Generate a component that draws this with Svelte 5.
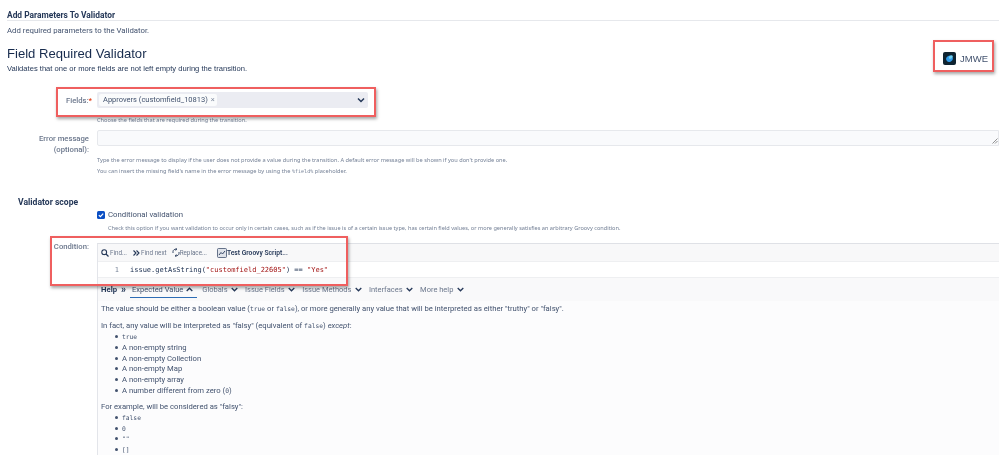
<script>
  const listA = ['A non-empty string', 'A non-empty Collection', 'A non-empty Map', 'A non-empty array'];
  const tabs = ['Globals', 'Issue Fields', 'Issue Methods', 'Interfaces', 'More help'];
</script>

<div class="page">
  <div class="section-title">Add Parameters To Validator</div>
  <div class="section-sub">Add required parameters to the Validator.</div>

  <div class="head">
    <div>
      <h1>Field Required Validator</h1>
      <p class="lead">Validates that one or more fields are not left empty during the transition.</p>
    </div>
    <div class="brand">
      <svg width="13" height="13" viewBox="0 0 13 13"><rect width="13" height="13" rx="2" fill="#0f2330"/><ellipse cx="6.5" cy="6.8" rx="3.4" ry="3" fill="#2f9ae8" transform="rotate(-35 6.5 6.8)"/><ellipse cx="7.8" cy="5" rx="2.2" ry="1.5" fill="#6fd0f0" transform="rotate(-35 7.8 5)"/></svg>
      <span>JMWE</span>
    </div>
  </div>

  <div class="row fields">
    <div class="label">Fields:<span class="req">*</span></div>
    <div class="control">
      <div class="select">
        <span class="chip">Approvers (customfield_10813) <span class="x">×</span></span>
        <svg class="chev" width="8" height="6" viewBox="0 0 8 6"><path d="M1 1.5 4 4.5 7 1.5" fill="none" stroke="#253858" stroke-width="1.5"/></svg>
      </div>
      <div class="help">Choose the fields that are required during the transition.</div>
    </div>
  </div>

  <div class="row error">
    <div class="label">Error message<br />(optional):</div>
    <div class="control">
      <div class="textarea">
        <svg class="grip" width="6" height="6" viewBox="0 0 6 6"><path d="M0.5 5.5 5.5 0.5M3 5.5 5.5 3" stroke="#777" stroke-width="0.8"/></svg>
      </div>
      <div class="help first">Type the error message to display if the user does not provide a value during the transition. A default error message will be shown if you don't provide one.</div>
      <div class="help">You can insert the missing field's name in the error message by using the <code>%field%</code> placeholder.</div>
    </div>
  </div>

  <div class="scope-title">Validator scope</div>
  <div class="row check">
    <div class="label"></div>
    <div class="control">
      <div class="check-line">
        <svg width="8" height="8" viewBox="0 0 8 8"><rect width="8" height="8" rx="1.5" fill="#0b4fc4"/><path d="M1.8 4.1 3.4 5.6 6.2 2.6" fill="none" stroke="#fff" stroke-width="1.2"/></svg>
        <span>Conditional validation</span>
      </div>
      <div class="help indent">Check this option if you want validation to occur only in certain cases, such as if the issue is of a certain issue type, has certain field values, or more generally satisfies an arbitrary Groovy condition.</div>
    </div>
  </div>

  <div class="row cond">
    <div class="label">Condition:</div>
    <div class="editor">
      <div class="toolbar">
        <span class="tool t1">
          <svg width="8" height="8" viewBox="0 0 8 8"><circle cx="3.2" cy="3.2" r="2.4" fill="none" stroke="#253858" stroke-width="1.1"/><path d="M5 5 7.5 7.5" stroke="#253858" stroke-width="1.2"/></svg>
          Find...
        </span>
        <span class="tool t2">
          <svg width="7" height="6" viewBox="0 0 7 6"><path d="M0.5 0.5 3 3 0.5 5.5M3.5 0.5 6 3 3.5 5.5" fill="none" stroke="#253858" stroke-width="1.1"/></svg>
          Find next
        </span>
        <span class="tool t3">
          <svg width="8" height="9" viewBox="0 0 8 9"><path d="M1 5V3.5C1 2 2.5 1.2 4 1.2M7 4v1.500C7 7 5.500 7.800 4 7.800M3.500 0 5 1.200 3.500 2.400M4.500 6.600 3 7.800 4.500 9" fill="none" stroke="#253858" stroke-width="0.9"/></svg>
          Replace...
        </span>
        <span class="tool test">
          <svg width="10" height="10" viewBox="0 0 10 10"><rect x="0.5" y="0.5" width="9" height="9" rx="1" fill="#dfe3ea" stroke="#42526e" stroke-width="0.8"/><path d="M2 7 4 4.500 5.500 6 8 3" fill="none" stroke="#253858" stroke-width="0.9"/></svg>
          <b>Test Groovy Script...</b>
        </span>
      </div>
      <div class="code">
        <span class="gutter">1</span>
        <span class="src">issue.getAsString(<em>"customfield_22605"</em>) == <em>"Yes"</em></span>
      </div>
      <div class="tabs">
        <b class="help-tag">Help</b><b class="arrows">»</b>
        <span class="tab active">Expected Value <svg width="7" height="5" viewBox="0 0 7 5"><path d="M0.700 4 3.500 1.200 6.300 4" fill="none" stroke="#253858" stroke-width="1.300"/></svg></span>
        {#each tabs as tab}
          <span class="tab">{tab} <svg width="7" height="5" viewBox="0 0 7 5"><path d="M0.700 1 3.500 3.800 6.300 1" fill="none" stroke="#253858" stroke-width="1.300"/></svg></span>
        {/each}
      </div>
      <div class="body">
        <p>The value should be either a boolean value (<code>true</code> or <code>false</code>), or more generally any value that will be interpreted as either "truthy" or "falsy".</p>
        <p class="tight">In fact, any value will be interpreted as "falsy" (equivalent of <code>false</code>) <i>except</i>:</p>
        <ul>
          <li><code>true</code></li>
          {#each listA as item}<li>{item}</li>{/each}
          <li>A number different from zero (<code>0</code>)</li>
        </ul>
        <p class="tight">For example, will be considered as "falsy":</p>
        <ul>
          <li><code>false</code></li>
          <li><code>0</code></li>
          <li><code>""</code></li>
          <li><code>[]</code></li>
        </ul>
      </div>
    </div>
  </div>

  <div class="mark m1"></div>
  <div class="mark m2"></div>
  <div class="mark m3"></div>
</div>

<style>
  :global(body) { margin: 0; background: #fff; }
  .page {
    position: relative;
    width: 999px;
    height: 455px;
    overflow: hidden;
    font-family: Roboto, sans-serif;
    font-size: 8px;
    color: #253858;
    filter: blur(0.3px);
  }
  .section-title {
    margin-left: 7px;
    padding-top: 10px;
    height: 10px;
    line-height: 10px;
    font-size: 8.4px;
    font-weight: 700;
    border-bottom: 1px solid #e6e8ec;
  }
  .section-sub { margin: 5px 0 0 7px; line-height: 10px; font-size: 7.8px; color: #42526e; }
  .head { display: flex; justify-content: space-between; padding: 9px 0 0 7px; height: 47px; }
  h1 {
    margin: 0;
    font: 400 13.1px/17px "Liberation Sans", sans-serif;
    color: #172b4d;
  }
  .lead { margin: 2px 0 0; font: 7.6px/10px "Liberation Sans", sans-serif; color: #253858; }
  .brand {
    display: flex;
    align-items: center;
    gap: 4px;
    height: 13px;
    margin: 7px 11px 0 0;
    font: 9.5px "Liberation Sans", sans-serif;
    color: #42526e;
  }
  .row { display: flex; }
  .label { width: 92px; flex: none; text-align: right; color: #6b778c; font-weight: 500; font-size: 7.7px; line-height: 11px; }
  .control { margin-left: 5px; flex: 1; min-width: 0; }
  .req { color: #de350b; }
  .fields .label { padding-top: 3px; }
  .select {
    width: 271px;
    height: 16px;
    background: #ebecf2;
    border-radius: 2px;
    display: flex;
    align-items: center;
    justify-content: space-between;
    padding: 0 2px;
    box-sizing: border-box;
  }
  .chip { background: #fafbfc; border-radius: 2px; padding: 0 2px 0 4px; line-height: 12px; color: #42526e; font-size: 7.5px; white-space: nowrap; }
  .x { color: #7a869a; margin-left: 1px; }
  .chev { margin-right: 1px; }
  .help { font-family: "Noto Sans", sans-serif; font-size: 5.65px; line-height: 11px; color: #748096; white-space: nowrap; }
  .fields .help { margin-top: 7px; }
  .error { margin-top: 4px; }
  .error .label { width: 89px; padding-top: 3px; margin-right: 3px; }
  .textarea {
    height: 16px;
    background: #f9fafc;
    border: 1px solid #e6e8ec;
    border-radius: 2px 0 0 2px;
    box-sizing: border-box;
    position: relative;
  }
  .grip { position: absolute; right: 0; bottom: 1px; }
  .help.first { margin-top: 9px; }
  code { font-family: "DejaVu Sans Mono", monospace; font-size: 0.9em; }
  .scope-title { margin: 20px 0 0 18px; font-size: 8.6px; line-height: 10px; font-weight: 700; color: #253858; }
  .check { margin-top: 3px; }
  .check-line { display: flex; align-items: center; gap: 3px; line-height: 10px; font-size: 7.8px; color: #42526e; }
  .help.indent { margin: 3px 0 0 11px; line-height: 11px; font-size: 5.6px; }
  .cond { margin-top: 9px; }
  .cond .label { width: 89px; margin: -2px 8px 0 0; }
  .editor { flex: 1; border-left: 1px solid #e3e5ea; border-top: 1px solid #dfe1e6; min-width: 0; }
  .toolbar {
    height: 17px;
    background: #f8f8f9;
    border-bottom: 1px solid #eeeff1;
    display: flex;
    align-items: center;
    padding-left: 3px;
    font-size: 6.3px;
    color: #6b778c;
  }
  .tool { display: inline-flex; align-items: center; gap: 1px; margin-right: 5px; white-space: nowrap; }
  .tool.t1 { margin-right: 6px; }
  .tool.t3 { gap: 0; }
  .tool.test { margin-left: 5px; color: #253858; gap: 0; }
  .tool.test b { font-weight: 600; font-size: 6.7px; }
  .code { height: 15px; display: flex; align-items: center; border-bottom: 1px solid #eeeff1; background: #fff; }
  .gutter { width: 27px; padding-right: 6px; text-align: right; box-sizing: border-box; color: #7a869a; font: 7px "DejaVu Sans Mono", monospace; }
  .src { padding-left: 5px; font: 7px "DejaVu Sans Mono", monospace; color: #172b4d; }
  .src em { font-style: normal; color: #a31515; }
  .tabs {
    height: 23px;
    background: #f9f9fa;
    display: flex;
    align-items: center;
    padding-left: 3px;
    font-size: 7.5px;
    color: #6b778c;
  }
  .help-tag { color: #253858; font-size: 7.75px; }
  .arrows { margin: 0 4px 0 4px; color: #253858; font-size: 10px; line-height: 10px; }
  .tab { display: inline-flex; align-items: center; gap: 3.5px; margin-right: 7px; height: 15px; white-space: nowrap; }
  .tab.active { color: #42526e; border-bottom: 1px solid #2d6cb5; padding: 0 4px 0 2px; margin-right: 5px; gap: 3px; }
  .body { background: #fcfcfd; padding: 2px 0 0 3px; font-size: 7.68px; line-height: 11px; color: #42526e; height: 160px; }
  .body code { font-size: 6.3px; }
  p { margin: 0 0 7px; white-space: nowrap; }
  p.tight { margin: 0; line-height: 10px; }
  ul { margin: 0 0 6px; padding: 0 0 0 21px; list-style: none; }
  li { height: 10.8px; position: relative; }
  li::before {
    content: "";
    position: absolute;
    left: -7px;
    top: 4px;
    width: 3px;
    height: 3px;
    border-radius: 50%;
    background: #42526e;
  }
  .mark {
    position: absolute;
    box-sizing: border-box;
    border: 2px solid #ef5f5f;
    box-shadow: 1px 2px 3px rgba(0, 0, 0, 0.35);
  }
  .m1 { left: 933px; top: 40px; width: 61px; height: 32px; }
  .m2 { left: 56px; top: 87px; width: 320px; height: 30px; }
  .m3 { left: 50px; top: 236px; width: 298px; height: 50px; }
</style>
